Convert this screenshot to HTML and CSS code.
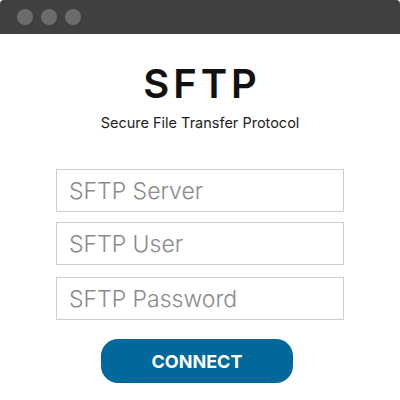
FILE: index.html
```html
<!DOCTYPE html>
<html lang="en">
<head>
<meta charset="utf-8">
<title>SFTP</title>
<link rel="stylesheet" href="styles.css">
</head>
<body>
<div class="window">
  <div class="titlebar">
    <span class="dot"></span>
    <span class="dot"></span>
    <span class="dot"></span>
  </div>
  <main class="content">
    <h1 class="title">SFTP</h1>
    <p class="subtitle">Secure File Transfer Protocol</p>
    <form class="form">
      <input class="field field-server" type="text" placeholder="SFTP Server">
      <input class="field field-user" type="text" placeholder="SFTP User">
      <input class="field field-pass" type="password" placeholder="SFTP Password">
      <button class="connect" type="button">CONNECT</button>
    </form>
  </main>
</div>
</body>
</html>
```
FILE: styles.css
```css
html, body {
  margin: 0;
  padding: 0;
  background: #ffffff;
}
body {
  width: 400px;
  height: 400px;
  overflow: hidden;
  font-family: "Inter", "Noto Sans", sans-serif;
}
.window {
  width: 400px;
  height: 400px;
}
.titlebar {
  height: 34px;
  background: #404040;
  border-radius: 4px 4px 0 0;
  display: flex;
  align-items: center;
  gap: 8px;
  padding-left: 17px;
  box-sizing: border-box;
}
.dot {
  width: 16px;
  height: 16px;
  border-radius: 50%;
  background: #6b6b6b;
}
.content {
  display: flex;
  flex-direction: column;
  align-items: center;
}
.title {
  margin: 30px 0 0;
  padding-left: 4px;
  font-size: 40px;
  line-height: 40px;
  font-weight: 600;
  letter-spacing: 4px;
  color: #111111;
}
.subtitle {
  margin: 10px 0 0;
  font-size: 14.5px;
  line-height: 18px;
  font-weight: 400;
  color: #222222;
}
.form {
  margin-top: 37px;
  display: flex;
  flex-direction: column;
  align-items: center;
}
.field {
  box-sizing: border-box;
  width: 288px;
  height: 43px;
  margin: 0;
  padding: 0 12px;
  border: 1px solid #cfcfcf;
  border-radius: 0;
  font-family: "Inter", "Noto Sans", sans-serif;
  font-size: 23px;
  font-weight: 300;
  color: #333333;
  outline: none;
}
.field::placeholder {
  color: #8a8a8a;
}
.field-server {
  margin-bottom: 10px;
}
.field-user {
  margin-bottom: 12px;
}
.connect {
  margin: 19px 6px 0 0;
  width: 192px;
  height: 44px;
  border: none;
  border-radius: 17px;
  background: #01689c;
  color: #ffffff;
  font-family: "Inter", "Open Sans", sans-serif;
  font-weight: 700;
  font-size: 18px;
  letter-spacing: 0;
  cursor: pointer;
}
```
